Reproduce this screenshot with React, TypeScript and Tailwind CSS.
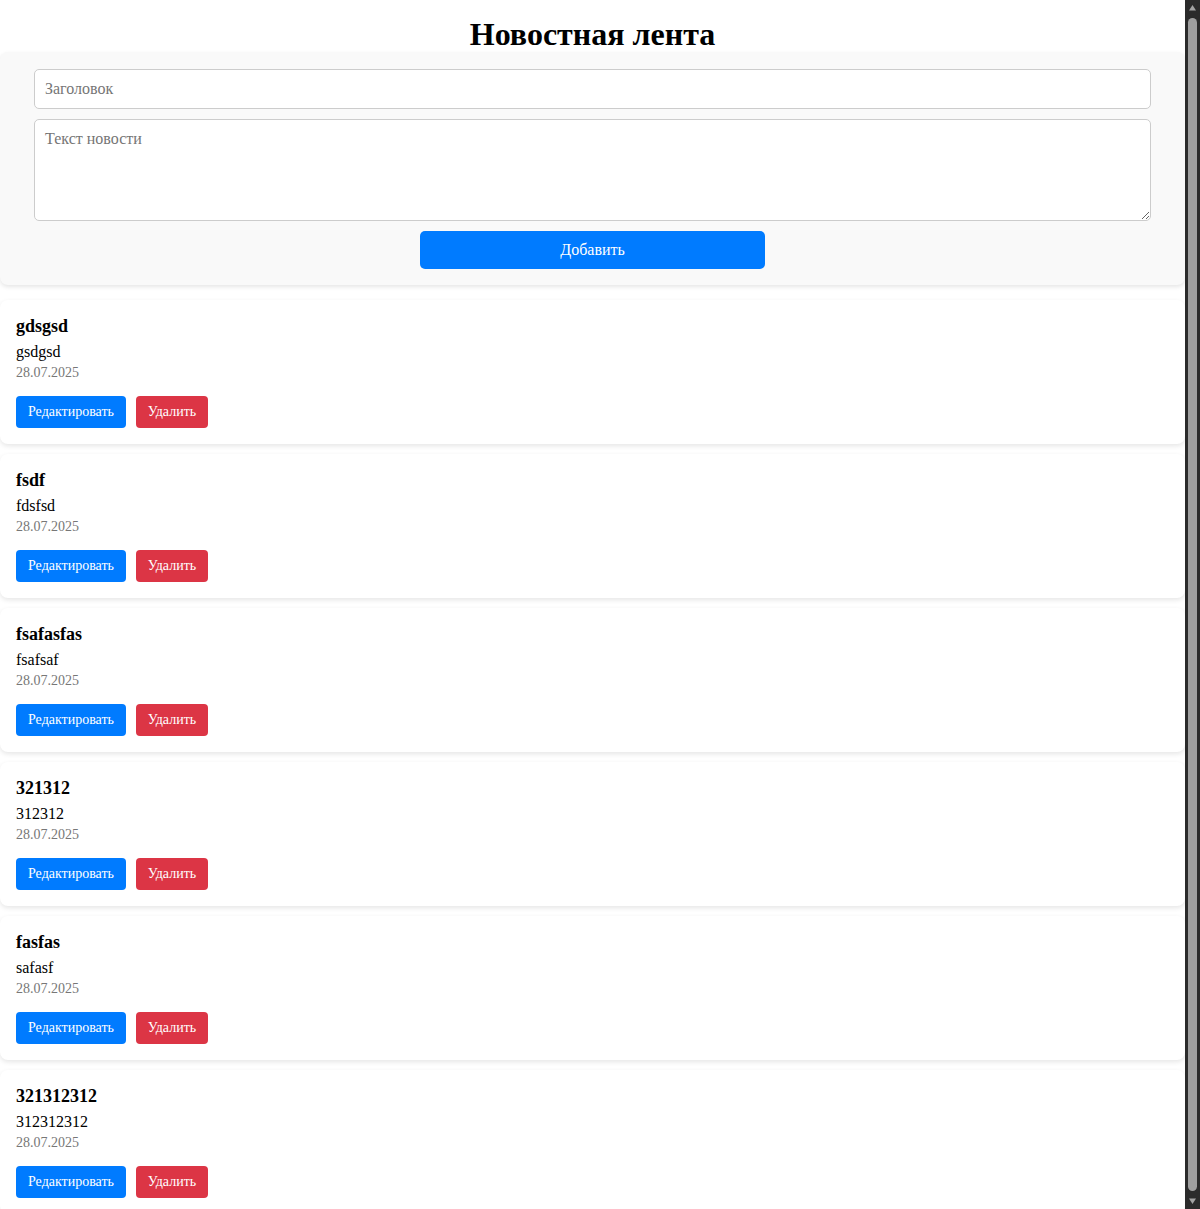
import React from "react";

const news = [
  { title: "gdsgsd", text: "gsdgsd" },
  { title: "fsdf", text: "fdsfsd" },
  { title: "fsafasfas", text: "fsafsaf" },
  { title: "321312", text: "312312" },
  { title: "fasfas", text: "safasf" },
  { title: "321312312", text: "312312312" },
];

function Scrollbar() {
  return (
    <div className="fixed right-0 top-0 h-screen w-[15px] bg-[#2b2b2b] flex flex-col items-center">
      <svg width="15" height="17" viewBox="0 0 15 17" className="shrink-0">
        <polygon points="7.5,5 11,10.5 4,10.5" fill="#a3a3a3" />
      </svg>
      <div className="flex-1 w-[9px] rounded-full bg-[#9f9f9f] my-[1px]" />
      <svg width="15" height="17" viewBox="0 0 15 17" className="shrink-0">
        <polygon points="4,6.5 11,6.5 7.5,12" fill="#a3a3a3" />
      </svg>
    </div>
  );
}

export default function App() {
  return (
    <div className="bg-white text-black" style={{ fontFamily: '"Liberation Serif", "Times New Roman", serif' }}>
      <div className="mr-[15px] pb-[8px]">
        <h1 className="text-center text-[32px] font-bold leading-[36px] pt-[16px]">Новостная лента</h1>
        <div className="bg-[#f9f9f9] rounded-[8px] shadow-[0_2px_4px_rgba(0,0,0,0.1)] px-[34px] pt-[17px] pb-[16px] flex flex-col items-center">
          <input
            className="w-full h-[40px] border border-[#ccc] rounded-[5px] bg-white px-[10px] text-[16px] leading-[18px] placeholder:text-[#757575] outline-none"
            placeholder="Заголовок"
          />
          <textarea
            className="w-full h-[102px] mt-[10px] border border-[#ccc] rounded-[5px] bg-white px-[10px] py-[10px] text-[16px] leading-[18px] placeholder:text-[#757575] outline-none resize-y block"
            placeholder="Текст новости"
          />
          <button className="mt-[10px] w-[345px] h-[38px] bg-[#007bff] text-white rounded-[5px] text-[16px]">
            Добавить
          </button>
        </div>
        <div className="mt-[15px] flex flex-col gap-[10px]">
          {news.map((n, i) => (
            <div key={i} className="bg-white rounded-[8px] shadow-[0_2px_5px_rgba(0,0,0,0.1)] p-[16px]">
              <div className="text-[18px] font-bold leading-[21px] mb-[6px]">{n.title}</div>
              <div className="text-[16px] leading-[18px] mb-[4px]">{n.text}</div>
              <div className="text-[14px] leading-[16px] text-[#777] mb-[15px]">28.07.2025</div>
              <div className="flex gap-[10px]">
                <button className="h-[32px] w-[110px] bg-[#007bff] text-white rounded-[4px] text-[14px] leading-[30px]">Редактировать</button>
                <button className="h-[32px] w-[72px] bg-[#dc3545] text-white rounded-[4px] text-[14px] leading-[30px]">Удалить</button>
              </div>
            </div>
          ))}
        </div>
      </div>
      <Scrollbar />
    </div>
  );
}
